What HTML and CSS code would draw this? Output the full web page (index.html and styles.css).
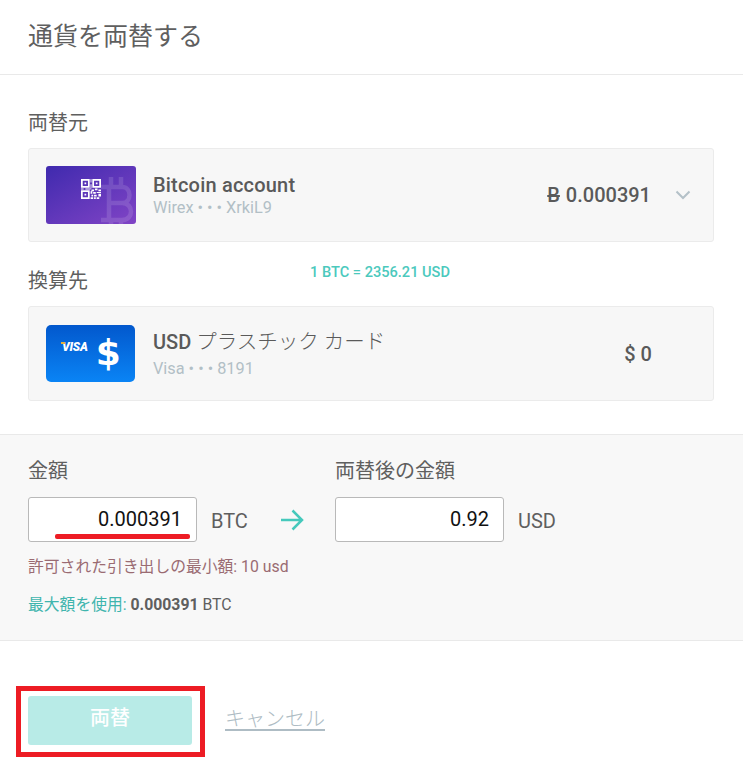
FILE: index.html
```html
<!DOCTYPE html>
<html lang="ja">
<head>
<meta charset="utf-8">
<title>通貨を両替する</title>
<link rel="stylesheet" href="styles.css">
</head>
<body>
<header class="header"><h1 class="title">通貨を両替する</h1></header>
<section class="accounts">
  <div class="label-row"><span class="label">両替元</span></div>
  <div class="card">
    <div class="thumb thumb-btc">
      <svg class="thumb-art" width="90" height="58" viewBox="0 0 90 58">
        <g fill="none" stroke="#fff" stroke-opacity=".13" stroke-width="4.500">
          <path d="M55 21h21c10 0 10 16 0 16H63M76 37c12 0 12 17 0 17H55M63 21v33M65 11v10M75 11v10M65 54v4M75 54v4"/>
        </g>
        <g fill="#fff" transform="translate(35 13) scale(.87) translate(-35 -13)">
          <path fill-rule="evenodd" d="M35 13h10v10H35zM37 15v6h6v-6zM48 13h10v10H48zM50 15v6h6v-6zM35 26h10v10H35zM37 28v6h6v-6z"/>
          <path d="M39 17h2v2h-2zM52 17h2v2h-2zM39 30h2v2h-2zM46 13h1v4h-1zM46 19h1v5h-1zM35 24h3v1h-3zM40 24h6v1h-6zM47 25h3v2h-3zM51 24h3v2h-3zM55 25h3v2h-3zM46 27h2v3h-2zM49 28h3v2h-3zM53 28h5v1h-5zM47 31h2v2h-2zM50 31h3v2h-3zM55 30h3v3h-3zM46 34h3v2h-3zM50 34h2v2h-2zM53 34h3v2h-3z"/>
        </g>
      </svg>
    </div>
    <div class="info">
      <div class="name">Bitcoin account</div>
      <div class="sub">Wirex • • • XrkiL9</div>
    </div>
    <div class="balance balance-btc"><span class="btc-sign">B</span> 0.000391</div>
    <svg class="chevron" width="16" height="10" viewBox="0 0 16 10"><path d="M1.5 1.5 8 8l6.500-6.500" fill="none" stroke="#b4c1c8" stroke-width="2"/></svg>
  </div>
  <div class="label-row label-row-to"><span class="label">換算先</span><span class="rate">1 BTC = 2356.21 USD</span></div>
  <div class="card card-to">
    <div class="thumb thumb-visa">
      <span class="visa">VISA</span>
      <span class="dollar">$</span>
    </div>
    <div class="info">
      <div class="name name-to"><b>USD</b> プラスチック カード</div>
      <div class="sub sub-to">Visa • • • 8191</div>
    </div>
    <div class="balance balance-usd">$ 0</div>
  </div>
</section>
<section class="exchange">
  <div class="fields">
    <div class="field">
      <div class="field-label">金額</div>
      <div class="input-row">
        <div class="input">0.000391<span class="underline"></span></div>
        <span class="unit">BTC</span>
      </div>
    </div>
    <svg class="arrow" width="24" height="22" viewBox="0 0 24 22"><path d="M1 11h21M12.500 1.500 22 11l-9.500 9.500" fill="none" stroke="#45c9bc" stroke-width="2.500"/></svg>
    <div class="field">
      <div class="field-label">両替後の金額</div>
      <div class="input-row">
        <div class="input">0.92</div>
        <span class="unit">USD</span>
      </div>
    </div>
  </div>
  <p class="min">許可された引き出しの最小額: 10 usd</p>
  <p class="max"><span class="max-link">最大額を使用:</span> <b>0.000391</b> BTC</p>
</section>
<footer class="actions">
  <button class="submit">両替<span class="red-box"></span></button>
  <a class="cancel" href="#">キャンセル</a>
</footer>
</body>
</html>
```
FILE: styles.css
```css
* { box-sizing: border-box; }
html, body { margin: 0; padding: 0; }
body {
  width: 743px;
  height: 759px;
  overflow: hidden;
  background: #fff;
  color: #5a5a5a;
  font-family: Roboto, "Noto Sans CJK JP", sans-serif;
}
.header { height: 75px; border-bottom: 1px solid #e9e9e9; padding: 21px 28px 0; }
.title { margin: 0; font-size: 25px; line-height: 32px; font-weight: 400; color: #5f5f5f; }
.accounts { padding: 0 29px 0 28px; height: 359px; }
.label-row { height: 73px; padding-top: 35px; display: flex; align-items: flex-start; }
.label-row-to { height: 64px; padding-top: 26px; }
.label { font-size: 20px; line-height: 27px; color: #5f5f5f; }
.rate { margin-left: 222px; margin-top: -6px; font-size: 14.600px; font-weight: 500; line-height: 20px; color: #4cc9bd; white-space: nowrap; }
.card {
  height: 94px;
  background: #f7f7f7;
  border: 1px solid #ebebeb;
  border-radius: 3px;
  display: flex;
  align-items: center;
  padding: 0 22px 0 17px;
}
.card-to { height: 95px; }
.thumb { flex: none; width: 90px; height: 58px; border-radius: 3px; margin-right: 17px; position: relative; overflow: hidden; }
.thumb-btc { background: linear-gradient(150deg, #3f2aae 0%, #8144c6 100%); }
.thumb-art { display: block; }
.thumb-visa { height: 57px; background: linear-gradient(180deg, #0258cd 0%, #0a84f5 100%); margin-right: 18px; border-radius: 5px; width: 89px; display: flex; align-items: center; padding-left: 16px; }
.visa { position: relative; font-size: 12px; font-weight: 900; font-style: italic; color: #fff; margin-top: -13px; letter-spacing: -.2px; }
.visa::before { content: ""; position: absolute; left: -1px; top: 2px; width: 4px; height: 2px; background: #e3b23c; }
.dollar { font-family: "DejaVu Sans", sans-serif; font-size: 36px; font-weight: 700; color: #fff; margin-left: 8px; margin-top: -2px; line-height: 1; }
.info { flex: 1; min-width: 0; }
.name { font-size: 20px; font-weight: 500; line-height: 24px; letter-spacing: .2px; color: #5a5a5a; }
.name-to { font-weight: 300; font-size: 20.500px; line-height: 26px; letter-spacing: 0; }
.name-to b { font-weight: 500; font-size: 20px; }
.sub { font-size: 16.300px; line-height: 20px; padding-top: 1px; color: #b2bfc6; }
.sub-to { padding-top: 4px; margin-bottom: -1px; }
.balance { font-size: 20px; font-weight: 500; color: #5a5a5a; }
.balance-btc { margin-right: 24px; word-spacing: 1px; }
.btc-sign { text-decoration: line-through; }
.balance-usd { margin-right: 39px; }
.chevron { flex: none; }
.exchange {
  height: 207px;
  background: #f8f8f8;
  border-top: 1px solid #e9e9e9;
  border-bottom: 1px solid #e9e9e9;
  padding: 23px 28px 0;
}
.fields { display: flex; align-items: flex-start; }
.field-label { font-size: 20px; line-height: 27px; color: #5f5f5f; margin-bottom: 12px; }
.input-row { display: flex; align-items: flex-start; }
.input {
  position: relative;
  width: 169px;
  height: 45px;
  background: #fff;
  border: 1px solid #b9b9b9;
  border-radius: 3px;
  font-size: 20px;
  line-height: 43px;
  text-align: right;
  padding-right: 14px;
  color: #111;
}
.underline { position: absolute; left: 26px; right: 6px; bottom: 2px; height: 5px; border-radius: 2px; background: #ed1c24; }
.unit { font-size: 20px; margin-left: 14px; color: #5f5f5f; line-height: 48px; width: 37px; }
.arrow { flex: none; margin: 51px 31px 0 32px; }
.min { margin: 12px 0 0; font-size: 15.800px; line-height: 20px; color: #9a6b72; }
.max { margin: 18px 0 0; font-size: 15.800px; line-height: 20px; color: #5f5f5f; }
.max-link { color: #3fb5ae; }
.actions { display: flex; align-items: center; padding: 55px 0 0 28px; }
.submit {
  position: relative;
  width: 164px;
  height: 49px;
  border: 0;
  border-radius: 3px;
  background: #b8ebe7;
  color: #fff;
  font: 500 20px/24px Roboto, "Noto Sans CJK JP", sans-serif;
  padding: 0 0 6px;
}
.red-box { position: absolute; left: -12px; top: -10px; width: 189px; height: 71px; border: 5px solid #ed1c24; }
.cancel { margin-left: 33px; font-size: 20px; font-weight: 300; color: #aebcc4; text-decoration: none; border-bottom: 2px solid #aebcc4; line-height: 19px; }
```
